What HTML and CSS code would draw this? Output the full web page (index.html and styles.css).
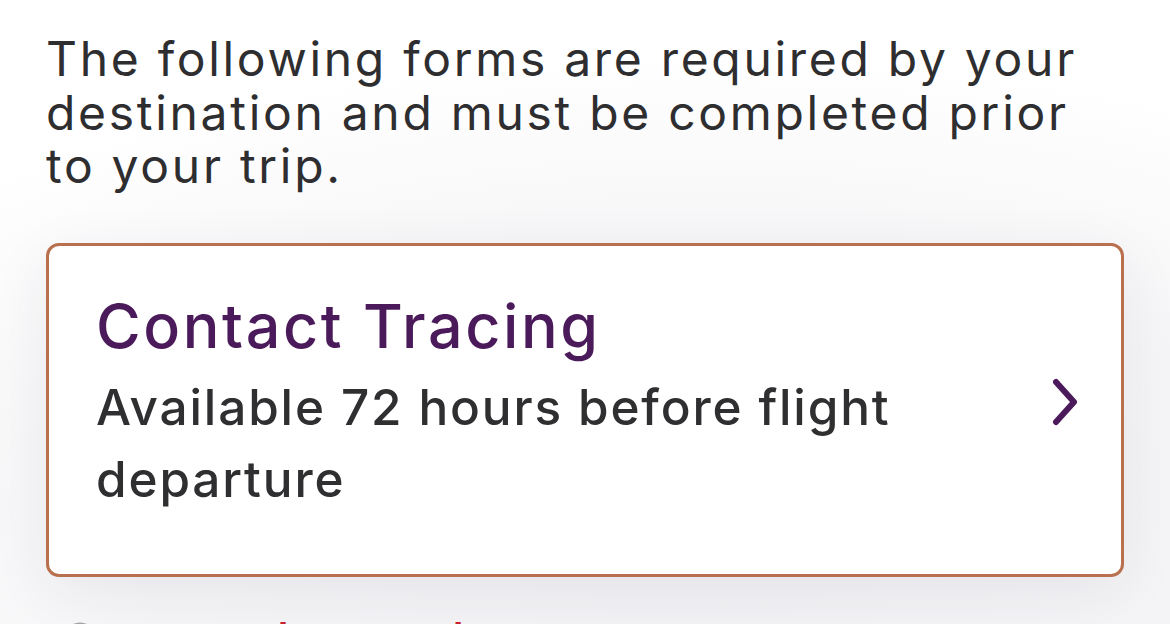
FILE: index.html
```html
<!DOCTYPE html>
<html lang="en">
<head>
<meta charset="utf-8">
<title>Required forms</title>
<link rel="stylesheet" href="styles.css">
</head>
<body>
<main class="page">
  <p class="intro">The following forms are required by your destination and must be completed prior to your trip.</p>
  <a class="form-card" href="#">
    <div class="form-card__text">
      <h2 class="form-card__title">Contact Tracing</h2>
      <p class="form-card__note">Available 72 hours before flight departure</p>
    </div>
    <svg class="form-card__chevron" viewBox="0 0 26 48" width="26" height="48" aria-hidden="true">
      <path d="M4 4 L22 24 L4 44" fill="none" stroke="currentColor" stroke-width="6" stroke-linecap="round" stroke-linejoin="round"/>
    </svg>
  </a>
  <p class="notice">
    <svg class="notice__icon" viewBox="0 0 36 36" width="36" height="36" aria-hidden="true">
      <circle cx="18" cy="18" r="15" fill="none" stroke="#a3a3a8" stroke-width="3"/>
    </svg>
    <span class="notice__text">bar code</span>
  </p>
</main>
</body>
</html>
```
FILE: styles.css
```css
html, body {
  margin: 0;
  padding: 0;
  height: 100%;
  overflow: hidden;
  background: #ffffff;
}

.page {
  padding: 32px 46px 0 46px;
  font-family: Inter, "Liberation Sans", sans-serif;
  color: #2e2e30;
  background: radial-gradient(ellipse 90% 70% at 60% 78%, #f1f1f4 0%, #f5f5f7 55%, #ffffff 100%);
  min-height: 100%;
  box-sizing: border-box;
}

.intro {
  margin: 0;
  max-width: 1060px;
  font-size: 48px;
  line-height: 53.7px;
  font-weight: 400;
  letter-spacing: 2.7px;
}

.form-card {
  margin-top: 50px;
  display: flex;
  align-items: flex-start;
  justify-content: space-between;
  height: 334px;
  box-sizing: border-box;
  padding: 49px 43px 0 47px;
  border: 3px solid #b8704e;
  border-radius: 13px;
  background: #ffffff;
  text-decoration: none;
  box-shadow: 0 14px 60px rgba(40, 40, 70, 0.07);
}

.form-card__text {
  max-width: 880px;
}

.form-card__title {
  margin: 0;
  font-size: 61px;
  line-height: 62px;
  font-weight: 500;
  letter-spacing: 2.6px;
  color: #4a1a5b;
}

.form-card__note {
  margin: 14px 0 0 0;
  font-size: 49.5px;
  line-height: 72px;
  font-weight: 500;
  letter-spacing: 1.85px;
  color: #2f2f31;
}

.form-card__chevron {
  align-self: center;
  flex: none;
  margin-bottom: 66px;
  color: #4a1a5b;
}

.notice {
  display: flex;
  align-items: flex-start;
  gap: 179px;
  margin: 36px 0 0 16px;
  font-size: 48px;
  line-height: 54px;
  font-weight: 500;
  letter-spacing: 2px;
  color: #c8202f;
}

.notice__icon {
  flex: none;
  margin-top: 8px;
}
```
